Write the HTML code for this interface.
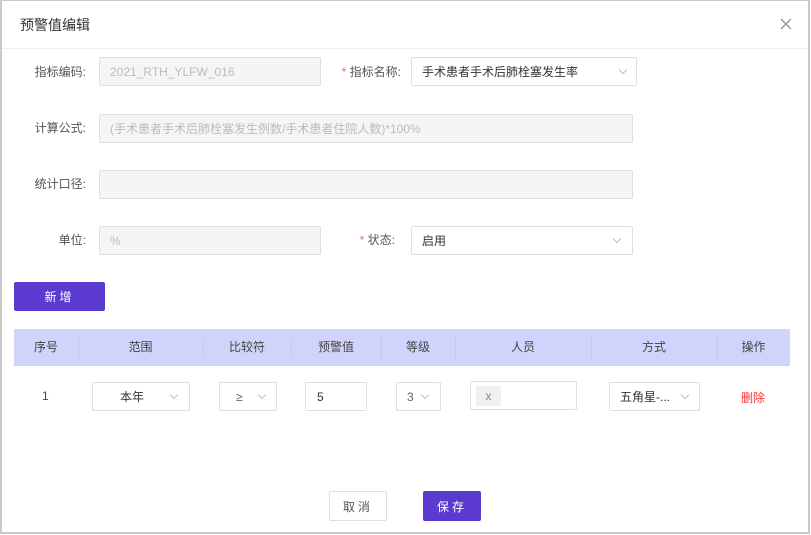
<!DOCTYPE html>
<html><head><meta charset="utf-8"><style>
*{box-sizing:border-box;margin:0;padding:0}
body{width:811px;height:535px;background:#fff;font-family:"Liberation Sans","Noto Sans CJK SC",sans-serif;font-size:12px;color:#333;position:relative;overflow:hidden}
.frame{position:absolute;left:0;top:0;width:810px;height:534px;border:2px solid #c9c9c9;border-top:1px solid #c9c9c9}
.a{position:absolute}
.lbl{position:absolute;text-align:right;color:#555;font-size:12px;line-height:16px}
.inp{position:absolute;border:1px solid #dcdfe6;border-radius:2px;background:#f5f5f5;color:#bbb;padding-left:10px;font-size:12px;display:flex;align-items:center}
.sel{position:absolute;border:1px solid #dcdfe6;border-radius:2px;background:#fff;color:#333;display:flex;align-items:center;font-size:12px}
.chev{position:absolute;width:6px;height:6px;border-right:1px solid #c0c0c0;border-bottom:1px solid #c0c0c0;transform:rotate(45deg)}
.star{color:#f56c6c}
.th{position:absolute;top:329px;height:37px;line-height:37px;text-align:center;font-size:12px;color:#444}
.sep{position:absolute;top:337px;height:22px;width:1px;background:#c3c7ee}
.btn{position:absolute;display:flex;align-items:center;justify-content:center;border-radius:2px;font-size:12px;letter-spacing:3px}
</style></head><body>
<div class="frame"></div>
<div class="a" style="left:20px;top:15px;font-size:14px;color:#333">预警值编辑</div>
<svg class="a" style="left:780px;top:18px" width="12" height="12" viewBox="0 0 12 12"><path d="M1 1L11 11M11 1L1 11" stroke="#909399" stroke-width="1.3" fill="none"/></svg>
<div class="a" style="left:2px;top:48px;width:806px;height:1px;background:#eee"></div>

<div class="lbl" style="left:20px;width:66px;top:64px">指标编码:</div>
<div class="inp" style="left:99px;top:57px;width:222px;height:29px">2021_RTH_YLFW_016</div>
<div class="lbl" style="left:320px;width:81px;top:64px"><span class="star">* </span>指标名称:</div>
<div class="sel" style="left:411px;top:57px;width:226px;height:29px;padding-left:10px">手术患者手术后肺栓塞发生率<span class="chev" style="left:208px;top:9px"></span></div>

<div class="lbl" style="left:20px;width:66px;top:120px">计算公式:</div>
<div class="inp" style="left:99px;top:114px;width:534px;height:29px">(手术患者手术后肺栓塞发生例数/手术患者住院人数)*100%</div>

<div class="lbl" style="left:20px;width:66px;top:176px">统计口径:</div>
<div class="inp" style="left:99px;top:170px;width:534px;height:29px"></div>

<div class="lbl" style="left:20px;width:66px;top:232px">单位:</div>
<div class="inp" style="left:99px;top:226px;width:222px;height:29px">%</div>
<div class="lbl" style="left:320px;width:75px;top:232px"><span class="star">* </span>状态:</div>
<div class="sel" style="left:411px;top:226px;width:222px;height:29px;padding-left:10px">启用<span class="chev" style="left:202px;top:9px"></span></div>

<div class="btn" style="left:14px;top:282px;width:91px;height:29px;background:#5b3bcf;color:#fff">新增</div>

<div class="a" style="left:14px;top:329px;width:776px;height:37px;background:#d0d4fc"></div>
<div class="th" style="left:14px;width:64px">序号</div>
<div class="sep" style="left:78px"></div>
<div class="th" style="left:78px;width:125px">范围</div>
<div class="sep" style="left:203px"></div>
<div class="th" style="left:203px;width:88px">比较符</div>
<div class="sep" style="left:291px"></div>
<div class="th" style="left:291px;width:90px">预警值</div>
<div class="sep" style="left:381px"></div>
<div class="th" style="left:381px;width:74px">等级</div>
<div class="sep" style="left:455px"></div>
<div class="th" style="left:455px;width:136px">人员</div>
<div class="sep" style="left:591px"></div>
<div class="th" style="left:591px;width:126px">方式</div>
<div class="sep" style="left:717px"></div>
<div class="th" style="left:717px;width:73px">操作</div>

<div class="a" style="left:42px;top:389px;color:#3b3f8f">1</div>
<div class="sel" style="left:92px;top:382px;width:98px;height:29px;padding-left:27px">本年<span class="chev" style="left:78px;top:9px"></span></div>
<div class="sel" style="left:219px;top:382px;width:58px;height:29px;padding-left:16px;color:#666">≥<span class="chev" style="left:39px;top:9px"></span></div>
<div class="sel" style="left:305px;top:382px;width:62px;height:29px;padding-left:11px">5</div>
<div class="sel" style="left:396px;top:382px;width:45px;height:29px;padding-left:10px;color:#666">3<span class="chev" style="left:25px;top:9px"></span></div>
<div class="sel" style="left:470px;top:381px;width:107px;height:29px"><span style="position:absolute;left:5px;top:4px;width:25px;height:20px;background:#f0f0f0;color:#888;text-align:center;line-height:20px">x</span></div>
<div class="sel" style="left:609px;top:382px;width:91px;height:29px;padding-left:10px">五角星-...<span class="chev" style="left:72px;top:9px"></span></div>
<div class="a" style="left:741px;top:389px;color:#f33">删除</div>

<div class="btn" style="left:329px;top:491px;width:58px;height:30px;border:1px solid #dcdfe6;color:#555;background:#fff">取消</div>
<div class="btn" style="left:423px;top:491px;width:58px;height:30px;background:#5b3bcf;color:#fff">保存</div>
</body></html>
